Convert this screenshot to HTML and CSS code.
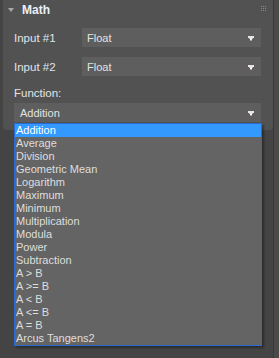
FILE: index.html
```html
<!DOCTYPE html>
<html lang="en">

<head>
    <meta charset="UTF-8">
    <meta name="viewport" content="width=device-width, initial-scale=1.0">
    <title>Math</title>
    <link rel="stylesheet" href="styles.css">
</head>

<body>
    <div class="window">
        <div class="main">
            <div class="panel">
                <div class="panel-header">
                    <span class="caret"></span>
                    <span class="panel-title">Math</span>
                    <svg class="grip" width="6" height="6" viewBox="0 0 6 6">
                        <rect x="0" y="0" width="1" height="1" />
                        <rect x="2" y="0" width="1" height="1" />
                        <rect x="4" y="0" width="1" height="1" />
                        <rect x="0" y="2" width="1" height="1" />
                        <rect x="2" y="2" width="1" height="1" />
                        <rect x="4" y="2" width="1" height="1" />
                        <rect x="0" y="4" width="1" height="1" />
                        <rect x="2" y="4" width="1" height="1" />
                        <rect x="4" y="4" width="1" height="1" />
                    </svg>
                </div>

                <div class="panel-body">
                    <div class="field-row">
                        <label class="field-label">Input #1</label>
                        <div class="combo">
                            <span>Float</span>
                            <svg class="combo-arrow" width="6" height="5" viewBox="0 0 6 5">
                                <rect x="0" y="0" width="6" height="2" fill="#e6e6e6" />
                                <rect x="1" y="2" width="4" height="1" fill="#c8b4b6" />
                                <rect x="2" y="2" width="2" height="2" fill="#f2f2f2" />
                                <rect x="2" y="4" width="2" height="1" fill="#c49a9e" />
                            </svg>
                        </div>
                    </div>
                    <div class="field-row">
                        <label class="field-label">Input #2</label>
                        <div class="combo">
                            <span>Float</span>
                            <svg class="combo-arrow" width="6" height="5" viewBox="0 0 6 5">
                                <rect x="0" y="0" width="6" height="2" fill="#e6e6e6" />
                                <rect x="1" y="2" width="4" height="1" fill="#c8b4b6" />
                                <rect x="2" y="2" width="2" height="2" fill="#f2f2f2" />
                                <rect x="2" y="4" width="2" height="1" fill="#c49a9e" />
                            </svg>
                        </div>
                    </div>

                    <label class="field-label block-label">Function:</label>
                    <div class="combo combo-wide">
                        <span>Addition</span>
                        <svg class="combo-arrow" width="6" height="5" viewBox="0 0 6 5">
                            <rect x="0" y="0" width="6" height="2" fill="#e6e6e6" />
                            <rect x="1" y="2" width="4" height="1" fill="#c8b4b6" />
                            <rect x="2" y="2" width="2" height="2" fill="#f2f2f2" />
                            <rect x="2" y="4" width="2" height="1" fill="#c49a9e" />
                        </svg>

                        <!-- open dropdown list -->
                        <ul class="dropdown">
                            <li class="selected">Addition</li>
                            <li>Average</li>
                            <li>Division</li>
                            <li>Geometric Mean</li>
                            <li>Logarithm</li>
                            <li>Maximum</li>
                            <li>Minimum</li>
                            <li>Multiplication</li>
                            <li>Modula</li>
                            <li>Power</li>
                            <li>Subtraction</li>
                            <li>A &gt; B</li>
                            <li>A &gt;= B</li>
                            <li>A &lt; B</li>
                            <li>A &lt;= B</li>
                            <li>A = B</li>
                            <li>Arcus Tangens2</li>
                        </ul>
                    </div>
                </div>
            </div>
        </div>
        <div class="scroll-strip"></div>
    </div>
</body>

</html>
```

FILE: styles.css
```css
* {
    box-sizing: border-box;
    margin: 0;
    padding: 0;
}

body {
    font-family: 'Liberation Sans', Arial, sans-serif;
    font-size: 11px;
    background-color: #444444;
    color: #dcdcdc;
    width: 279px;
    height: 358px;
    overflow: hidden;
}

.window {
    display: flex;
    height: 358px;
}

.main {
    width: 273px;
    padding-left: 3px;
}

.scroll-strip {
    flex: 1;
    border-left: 1px solid #383838;
    background-color: #4a4a4a;
}

.panel {
    background-color: #525252;
    border-radius: 0 0 4px 4px;
    padding-bottom: 8px;
}

.panel-header {
    display: flex;
    align-items: center;
    height: 20px;
    padding-left: 5px;
    padding-right: 6px;
}

.caret {
    width: 0;
    height: 0;
    border-left: 3px solid transparent;
    border-right: 3px solid transparent;
    border-top: 4px solid #a8a8a8;
    margin-right: 8px;
    margin-top: -1px;
}

.panel-title {
    font-size: 12px;
    font-weight: bold;
    color: #eaf0fa;
    flex: 1;
}

.grip {
    fill: #8a8a8a;
    margin-top: -3px;
}

.panel-body {
    padding: 0 12px 0 11px;
}

.field-row {
    display: flex;
    align-items: center;
    margin-top: 8px;
}

.field-row + .field-row {
    margin-top: 10px;
}

.field-label {
    width: 68px;
    color: #e2e4e8;
    font-size: 11.5px;
}

.block-label {
    display: block;
    width: auto;
    margin-top: 10px;
    line-height: 14px;
}

.combo {
    flex: 1;
    height: 19px;
    background-color: #5e5e5e;
    display: flex;
    align-items: center;
    justify-content: space-between;
    padding: 0 7px 0 5px;
    color: #e2e2e2;
    position: relative;
}

.combo-arrow {
    display: block;
    margin-top: 1px;
}

.combo-wide {
    margin-top: 3px;
    padding-left: 6px;
}

.dropdown {
    list-style: none;
    position: absolute;
    top: 20px;
    left: 0;
    width: 248px;
    background-color: #646464;
    border: 1px solid #2a6ad4;
    box-shadow: 2px 2px 2px rgba(0, 0, 0, 0.35);
}

.dropdown li {
    height: 13px;
    line-height: 13px;
    padding-left: 1px;
    color: #dedede;
    white-space: nowrap;
}

.dropdown li.selected {
    background-color: #3399ff;
    color: #ffffff;
}
```
